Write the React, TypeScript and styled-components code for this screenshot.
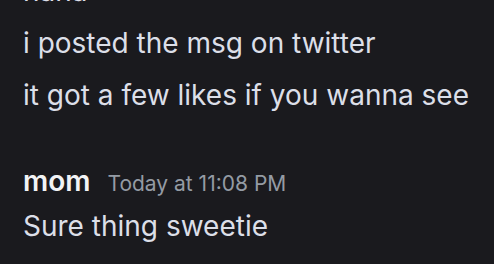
import React from 'react';
import styled, { createGlobalStyle } from 'styled-components';

const GlobalStyle = createGlobalStyle`
  html, body {
    margin: 0;
    padding: 0;
    background: #1a1a1e;
    overflow: hidden;
  }
`;

const Chat = styled.div`
  width: 494px;
  height: 264px;
  overflow: hidden;
  background: #1a1a1e;
  font-family: Inter, 'Noto Sans', sans-serif;
`;

const List = styled.div`
  margin-top: -35px;
  padding-left: 23px;
`;

const Line = styled.div`
  color: #dcdfe8;
  font-size: 28px;
  height: 52px;
  line-height: 52px;
  white-space: nowrap;
`;

const Group = styled.div`
  margin-top: 40px;
`;

const Header = styled.div`
  display: flex;
  align-items: baseline;
  gap: 17px;
  height: 40px;
  line-height: 40px;
`;

const Name = styled.span`
  color: #f2f3f5;
  font-size: 28px;
  font-weight: 600;
`;

const Time = styled.span`
  color: #949ba4;
  font-size: 21px;
`;

const Body = styled.div`
  color: #dcdfe8;
  font-size: 28px;
  line-height: 50px;
`;

export default function App() {
  return (
    <Chat>
      <GlobalStyle />
      <List>
        <Line>nana</Line>
        <Line>i posted the msg on twitter</Line>
        <Line>it got a few likes if you wanna see</Line>
        <Group>
          <Header>
            <Name>mom</Name>
            <Time>Today at 11:08 PM</Time>
          </Header>
          <Body>Sure thing sweetie</Body>
        </Group>
      </List>
    </Chat>
  );
}
